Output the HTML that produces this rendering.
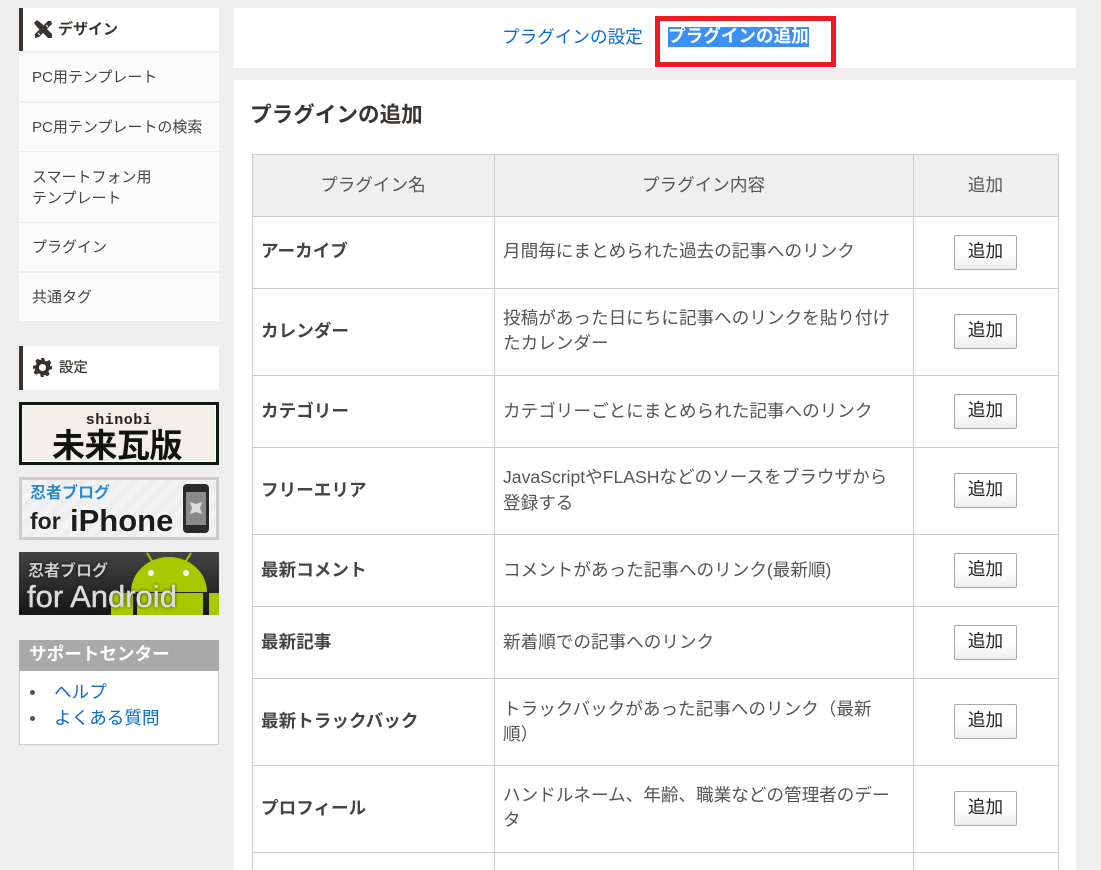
<!DOCTYPE html>
<html lang="ja"><head><meta charset="utf-8"><title>プラグインの追加</title>
<style>
*{box-sizing:border-box}
html,body{margin:0;padding:0;width:1101px;height:870px;overflow:hidden;background:#eee}
body{position:relative;font-family:"Liberation Sans","Noto Sans CJK JP",sans-serif;color:#444;font-size:17.6px}
.a{position:absolute}
.w{background:#fff}
.t{position:absolute;white-space:nowrap}
.item{position:absolute;left:19px;width:200px;background:#fcfcfc;}
.item span{position:absolute;left:13px;font-size:15px;line-height:21px;color:#444;white-space:nowrap}
.hd{position:absolute;left:19px;width:200px;background:#fff;border-left:4px solid #3b352d}
a{color:#0b6bd0;text-decoration:none}
.line{position:absolute;background:#ccc}
.cell{position:absolute;white-space:nowrap;line-height:26px}
.b{font-weight:700;color:#444;left:261px}
.d{left:503px;color:#555}
.btn{position:absolute;left:954px;width:63px;height:35px;border:1px solid #a9a9a9;border-radius:2px;background:linear-gradient(#fff,#fff 55%,#ececec);color:#222;font-size:17.6px;line-height:30px;text-align:center}
.th{position:absolute;top:154px;height:62px;line-height:62px;text-align:center;color:#555;background:transparent}
</style></head><body>

<div class="hd" style="top:8px;height:43px"></div>
<svg class="a" style="left:33px;top:20px" width="20" height="19" viewBox="0 0 20 19"><path d="M1 3 L4 0 L8 3 L19 14 L19 18 L15 18 L4 7 Z" fill="#38332c"/><path d="M15 1 L18 1 L19 4 L6 17 L2 18 L2 14 Z" fill="#38332c"/><path d="M13 5l2 2M5 13l2 2" stroke="#fff" stroke-width="1"/></svg>
<div class="t" style="left:58px;top:19px;font-size:15px;line-height:21px;font-weight:700;color:#38332c">デザイン</div>
<div class="item" style="top:53px;height:48px"><span style="top:14px">PC用テンプレート</span></div>
<div class="item" style="top:103px;height:48px"><span style="top:14px">PC用テンプレートの検索</span></div>
<div class="item" style="top:152px;height:70px"><span style="top:15px">スマートフォン用<br>テンプレート</span></div>
<div class="item" style="top:223px;height:48px"><span style="top:14px">プラグイン</span></div>
<div class="item" style="top:273px;height:48px"><span style="top:14px">共通タグ</span></div>

<div class="hd" style="top:346px;height:44px"></div>
<svg class="a" style="left:33px;top:358px" width="19" height="19" viewBox="0 0 24 24"><path fill="#38332c" fill-rule="evenodd" d="M10 0h4l1 3.400 2.200.9 3.100-1.700 2.800 2.800-1.700 3.100.9 2.200L24 10v4l-3.700 1-.9 2.200 1.700 3.100-2.800 2.800-3.100-1.700-2.200.9L14 24h-4l-1-3.700-2.200-.9-3.100 1.700-2.800-2.800 1.700-3.100-.9-2.200L0 14v-4l3.700-1 .9-2.200L2.900 3.700 5.700.9l3.100 1.700 2.200-.9zM12 7.500a4.500 4.500 0 1 0 0 9 4.500 4.500 0 0 0 0-9z"/></svg>
<div class="t" style="left:59px;top:358px;font-size:14.4px;line-height:21px;font-weight:400;color:#38332c;-webkit-text-stroke:.2px #38332c">設定</div>

<!-- banner 1 -->
<div class="a" style="left:19px;top:402px;width:200px;height:63px;background:#f2efe9;border:3px solid #0d1a10;box-shadow:inset 0 0 0 1px #fff"></div>
<div class="t" style="left:19px;width:200px;top:412px;text-align:center;font-family:'Liberation Mono',monospace;font-weight:700;font-size:15px;line-height:17px;color:#222;letter-spacing:.5px">shinobi</div>
<div class="t" style="left:17px;width:200px;top:424px;text-align:center;font-family:'WenQuanYi Zen Hei','Noto Sans CJK JP',sans-serif;font-weight:700;font-size:33px;line-height:38px;color:#111;letter-spacing:-.5px">未来瓦版</div>

<!-- banner 2 -->
<div class="a" style="left:19px;top:477px;width:200px;height:63px;background:repeating-linear-gradient(135deg,#f3f3f3 0 6px,#eeeeee 6px 12px);border:3px solid #ccc"></div>
<div class="t" style="left:30px;top:482px;font-size:16px;line-height:24px;font-weight:700;color:#2a8ad0;text-shadow:0 0 2px #fff">忍者ブログ</div>
<div class="t" style="left:30px;top:506px;font-size:23px;line-height:30px;font-weight:700;color:#222;text-shadow:0 0 3px #fff">for</div>
<div class="t" style="left:70px;top:503px;font-size:31px;line-height:36px;font-weight:700;color:#1c1c1c;text-shadow:0 0 3px #fff">iPhone</div>
<div class="a" style="left:183px;top:484px;width:26px;height:49px;background:#2a2a2a;border-radius:4px"></div>
<div class="a" style="left:186px;top:492px;width:20px;height:33px;background:#8a8a8a"></div>
<svg class="a" style="left:189px;top:501px" width="14" height="14" viewBox="0 0 14 14"><path d="M1 1l6 2 6-2-2 6 2 6-6-2-6 2 2-6z" fill="#ddd"/></svg>

<!-- banner 3 -->
<div class="a" style="left:19px;top:552px;width:200px;height:63px;background:linear-gradient(#444,#161616);overflow:hidden">
<svg width="200" height="63" style="position:absolute;left:0;top:0" viewBox="0 0 200 63"><path d="M128 1l5 8M172 1l-5 8" stroke="#a8c800" stroke-width="2"/><path d="M112 40a38 35 0 0 1 76 0z" fill="#a8c800"/><circle cx="132" cy="21" r="3" fill="#fff"/><circle cx="167" cy="21" r="3" fill="#fff"/><path d="M92 41h22v22H92zM118 41h66v22h-66z M190 41h10v22h-10z" fill="#a8c800"/></svg>
<div class="t" style="left:9px;top:8px;font-size:16px;line-height:24px;font-weight:700;color:#ccc;text-shadow:0 0 3px #000">忍者ブログ</div>
<div class="t" style="left:8px;top:28px;font-size:31px;line-height:34px;color:#ddd;text-shadow:0 0 3px #222;-webkit-text-stroke:.4px #ddd">for Android</div>
</div>

<!-- support -->
<div class="a w" style="left:19px;top:640px;width:200px;height:105px;border:1px solid #ccc;border-top:0"></div>
<div class="a" style="left:19px;top:640px;width:200px;height:31px;background:#a9a9a9"></div>
<div class="t" style="left:29px;top:641px;font-size:17.6px;line-height:26px;font-weight:700;color:#fff">サポートセンター</div>
<div class="a" style="left:30px;top:690px;width:5px;height:5px;border-radius:50%;background:#555"></div>
<div class="a" style="left:30px;top:716px;width:5px;height:5px;border-radius:50%;background:#555"></div>
<a class="t" style="left:54px;top:679px;line-height:26px">ヘルプ</a>
<a class="t" style="left:54px;top:705px;line-height:26px">よくある質問</a>

<!-- tabs -->
<div class="a w" style="left:234px;top:8px;width:842px;height:60px"></div>
<a class="t" style="left:502px;top:24px;line-height:26px">プラグインの設定</a>
<div class="a" style="left:655px;top:16px;width:181px;height:51px;border:5px solid #ed1c24"></div>
<div class="t" style="left:668px;top:27px;height:20px;line-height:18px;background:#3b90f7;color:#fff;font-weight:700">プラグインの追加</div>

<!-- main -->
<div class="a w" style="left:234px;top:80px;width:842px;height:790px"></div>
<div class="t" style="left:250px;top:99px;font-size:21.6px;line-height:32px;font-weight:700;color:#3a3530">プラグインの追加</div>

<div class="a" style="left:252px;top:154px;width:807px;height:62px;background:#efefef"></div>
<div class="line" style="left:252px;top:154px;width:807px;height:1px"></div>
<div class="line" style="left:252px;top:216px;width:807px;height:1px"></div>
<div class="line" style="left:252px;top:288px;width:807px;height:1px"></div>
<div class="line" style="left:252px;top:375px;width:807px;height:1px"></div>
<div class="line" style="left:252px;top:447px;width:807px;height:1px"></div>
<div class="line" style="left:252px;top:534px;width:807px;height:1px"></div>
<div class="line" style="left:252px;top:606px;width:807px;height:1px"></div>
<div class="line" style="left:252px;top:678px;width:807px;height:1px"></div>
<div class="line" style="left:252px;top:765px;width:807px;height:1px"></div>
<div class="line" style="left:252px;top:852px;width:807px;height:1px"></div>
<div class="line" style="left:252px;top:154px;width:1px;height:716px"></div>
<div class="line" style="left:494px;top:154px;width:1px;height:716px"></div>
<div class="line" style="left:913px;top:154px;width:1px;height:716px"></div>
<div class="line" style="left:1058px;top:154px;width:1px;height:716px"></div>

<div class="th" style="left:252px;width:242px">プラグイン名</div>
<div class="th" style="left:494px;width:419px">プラグイン内容</div>
<div class="th" style="left:913px;width:145px">追加</div>

<div class="cell b" style="top:238px">アーカイブ</div>
<div class="cell d" style="top:238px">月間毎にまとめられた過去の記事へのリンク</div>
<div class="btn" style="top:235px">追加</div>

<div class="cell b" style="top:318px">カレンダー</div>
<div class="cell d" style="top:306px;line-height:25px">投稿があった日にちに記事へのリンクを貼り付け<br>たカレンダー</div>
<div class="btn" style="top:314px">追加</div>

<div class="cell b" style="top:398px">カテゴリー</div>
<div class="cell d" style="top:398px">カテゴリーごとにまとめられた記事へのリンク</div>
<div class="btn" style="top:394px">追加</div>

<div class="cell b" style="top:477px">フリーエリア</div>
<div class="cell d" style="top:464px">JavaScriptやFLASHなどのソースをブラウザから<br>登録する</div>
<div class="btn" style="top:473px">追加</div>

<div class="cell b" style="top:557px">最新コメント</div>
<div class="cell d" style="top:557px">コメントがあった記事へのリンク(最新順)</div>
<div class="btn" style="top:553px">追加</div>

<div class="cell b" style="top:629px">最新記事</div>
<div class="cell d" style="top:629px">新着順での記事へのリンク</div>
<div class="btn" style="top:625px">追加</div>

<div class="cell b" style="top:708px">最新トラックバック</div>
<div class="cell d" style="top:697px;line-height:25px">トラックバックがあった記事へのリンク（最新<br>順）</div>
<div class="btn" style="top:704px">追加</div>

<div class="cell b" style="top:795px">プロフィール</div>
<div class="cell d" style="top:783px;line-height:25px">ハンドルネーム、年齢、職業などの管理者のデー<br>タ</div>
<div class="btn" style="top:791px">追加</div>

</body></html>
